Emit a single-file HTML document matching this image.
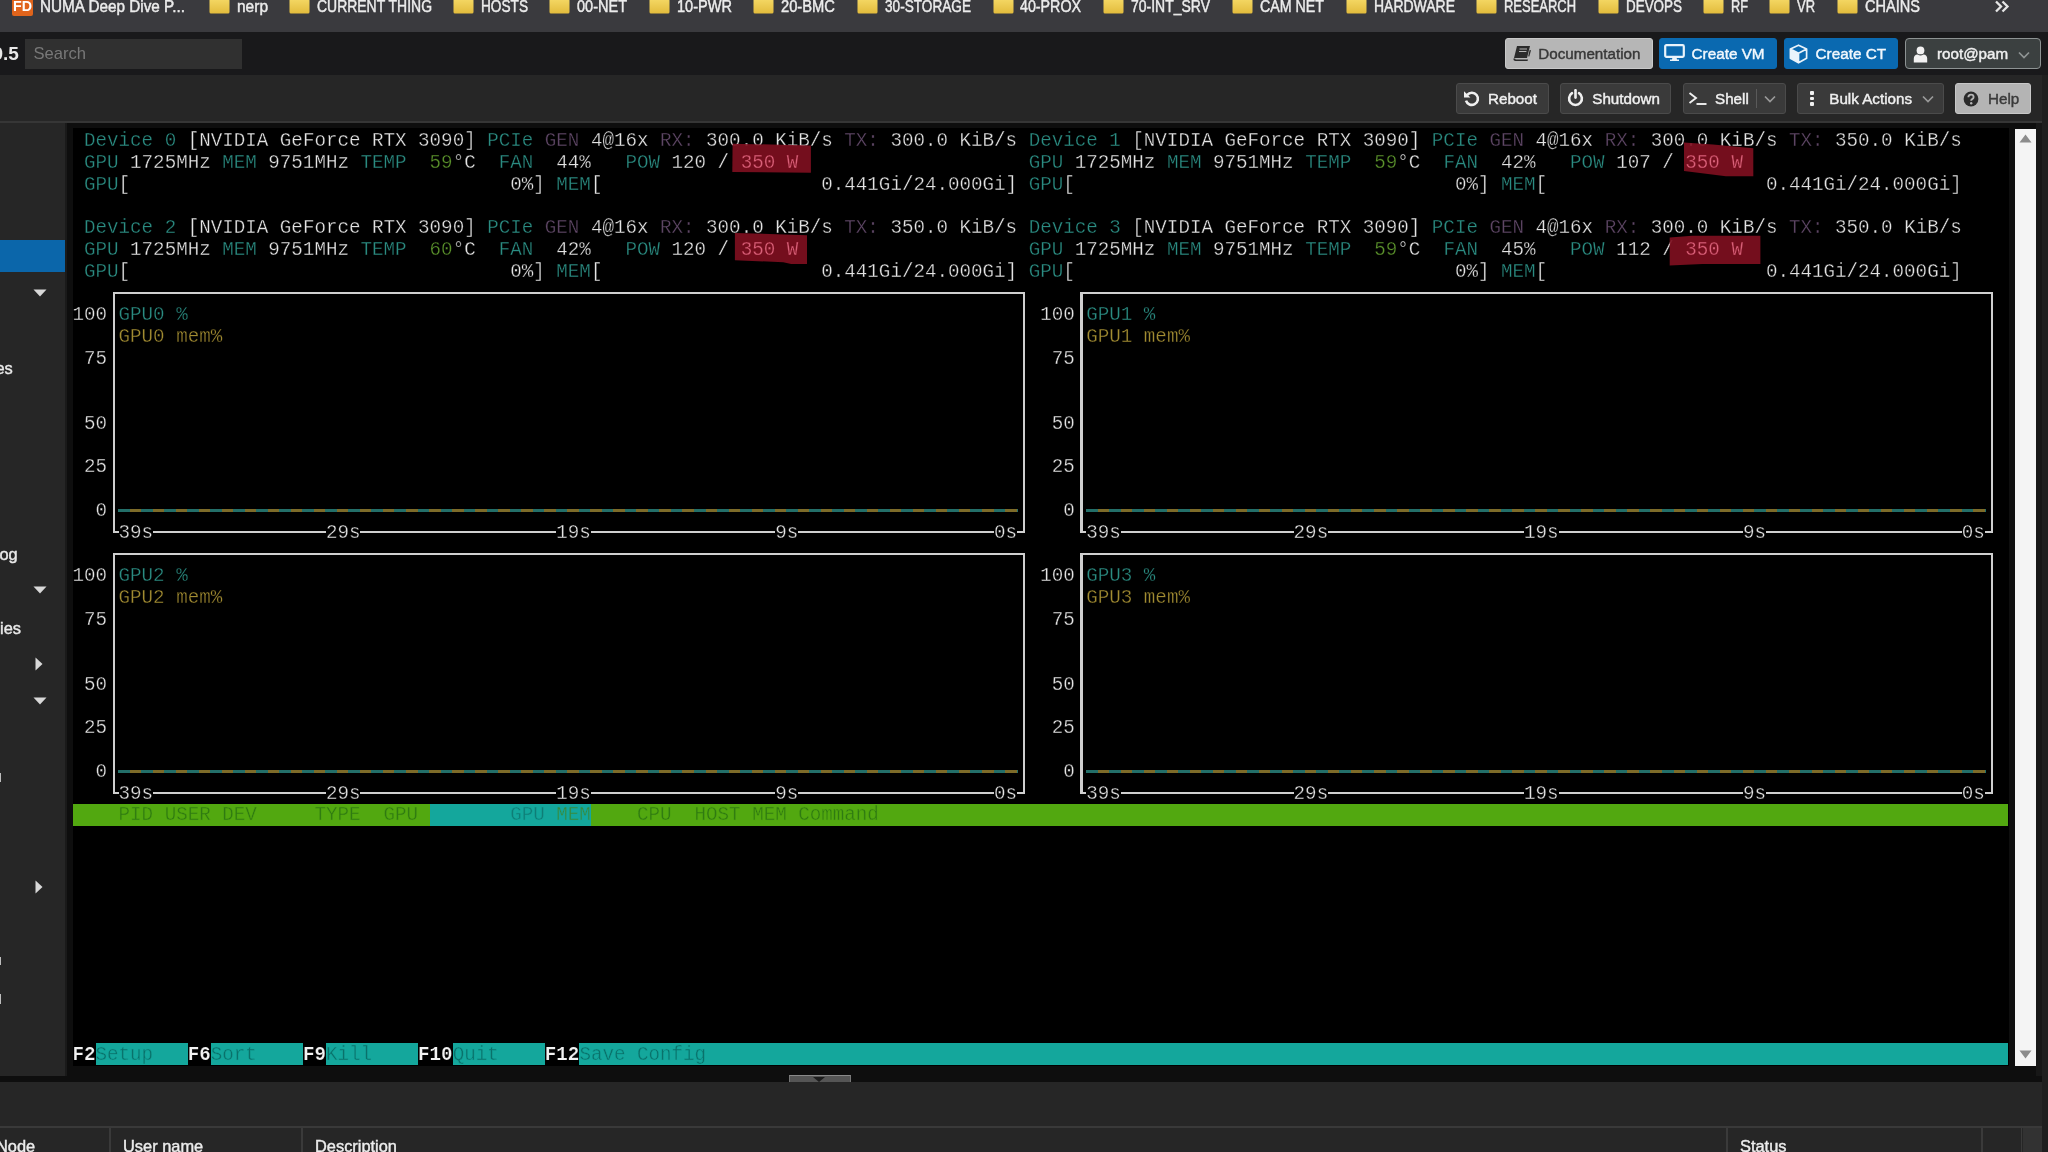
<!DOCTYPE html>
<html><head><meta charset="utf-8"><title>pve</title>
<style>
html,body{margin:0;padding:0;}
body{width:2048px;height:1152px;overflow:hidden;background:#262626;position:relative;font-family:"Liberation Sans",sans-serif;}
.t{position:absolute;font-family:"Liberation Mono",monospace;font-size:19.2px;line-height:21.75px;height:21.75px;white-space:pre;transform:scaleY(1.1);transform-origin:0 6.7px;-webkit-text-stroke:0.32px #000;}
.s{position:absolute;white-space:pre;font-family:"Liberation Sans",sans-serif;}
.bm{position:absolute;top:-5px;font-size:15px;line-height:20px;color:#e6e6e6;white-space:pre;}
.fo{position:absolute;top:-3px;width:20px;height:16px;}
.btn{position:absolute;box-sizing:border-box;border-radius:3px;}
.tb{background:#3a3a3a;border:1px solid #4a4a4a;top:84px;height:29px;}
.lbl{position:absolute;font-size:15.2px;line-height:20px;white-space:pre;-webkit-text-stroke:0.42px currentColor;}
</style></head><body><div id="root" style="position:absolute;left:0;top:0;width:2048px;height:1152px;will-change:transform;overflow:hidden;">

<div style="position:absolute;left:0.00px;top:0.00px;width:2048.00px;height:32.00px;background:#3a3a3e;"></div>
<div style="position:absolute;left:0.00px;top:32.00px;width:2048.00px;height:43.00px;background:#19191b;"></div>
<div style="position:absolute;left:0.00px;top:75.00px;width:2048.00px;height:47.00px;background:#262626;"></div>
<div style="position:absolute;left:0.00px;top:121.00px;width:2042.00px;height:2.00px;background:#363636;"></div>
<div style="position:absolute;left:2042.00px;top:75.00px;width:6.00px;height:1077.00px;background:#1f1f1f;"></div>
<div style="position:absolute;left:0.00px;top:123.00px;width:66.00px;height:953.00px;background:#262626;"></div>
<div style="position:absolute;left:65.00px;top:123.00px;width:2.00px;height:953.00px;background:#1a1a1a;"></div>
<div style="position:absolute;left:67.00px;top:123.00px;width:1975.00px;height:953.00px;background:#0e0e0e;"></div>
<div style="position:absolute;left:72.50px;top:128.00px;width:1936.00px;height:938.00px;background:#000;"></div>
<div style="position:absolute;left:2036.00px;top:123.00px;width:6.00px;height:953.00px;background:#171717;"></div>
<div style="position:absolute;left:2015.00px;top:129.00px;width:21.00px;height:936.50px;background:#f4f4f4;"></div>
<div style="position:absolute;left:0.00px;top:1075.50px;width:2042.00px;height:6.00px;background:#0e0e0e;"></div>
<div style="position:absolute;left:0.00px;top:1081.50px;width:2042.00px;height:71.00px;background:#262626;"></div>
<div style="position:absolute;left:12px;top:-4px;width:21px;height:20px;background:#e0641c;border-radius:2px;"></div>
<svg style="position:absolute;left:13.0px;top:-6.8px;overflow:visible" width="19.0" height="24"><text x="0" y="18.0" textLength="19.0" lengthAdjust="spacingAndGlyphs" font-family="Liberation Sans, sans-serif" font-size="15" font-weight="bold" fill="#fff" stroke="#fff" stroke-width="0">FD</text></svg>
<svg style="position:absolute;left:40.0px;top:-8.3px;overflow:visible" width="145.0" height="26"><text x="0" y="19.7" textLength="145.0" lengthAdjust="spacingAndGlyphs" font-family="Liberation Sans, sans-serif" font-size="16.4" font-weight="normal" fill="#ececec" stroke="#ececec" stroke-width="0.45">NUMA Deep Dive P...</text></svg>
<svg style="position:absolute;left:209px;top:-3.5px" width="21" height="17" viewBox="0 0 21 17"><defs><linearGradient id="fg209" x1="0" y1="0" x2="0" y2="1"><stop offset="0" stop-color="#f7dc6a"/><stop offset="1" stop-color="#e2bb3c"/></linearGradient></defs><path d="M1 0 H8 L10 2 H19 Q20.5 2 20.5 3.5 V15 Q20.5 16.5 19 16.5 H2 Q0.5 16.5 0.5 15 V1 Q0.5 0 1 0Z" fill="url(#fg209)"/></svg>
<svg style="position:absolute;left:237.0px;top:-8.3px;overflow:visible" width="31.0" height="26"><text x="0" y="19.7" textLength="31.0" lengthAdjust="spacingAndGlyphs" font-family="Liberation Sans, sans-serif" font-size="16.4" font-weight="normal" fill="#ececec" stroke="#ececec" stroke-width="0.45">nerp</text></svg>
<svg style="position:absolute;left:289px;top:-3.5px" width="21" height="17" viewBox="0 0 21 17"><defs><linearGradient id="fg289" x1="0" y1="0" x2="0" y2="1"><stop offset="0" stop-color="#f7dc6a"/><stop offset="1" stop-color="#e2bb3c"/></linearGradient></defs><path d="M1 0 H8 L10 2 H19 Q20.5 2 20.5 3.5 V15 Q20.5 16.5 19 16.5 H2 Q0.5 16.5 0.5 15 V1 Q0.5 0 1 0Z" fill="url(#fg289)"/></svg>
<svg style="position:absolute;left:317.0px;top:-8.3px;overflow:visible" width="115.0" height="26"><text x="0" y="19.7" textLength="115.0" lengthAdjust="spacingAndGlyphs" font-family="Liberation Sans, sans-serif" font-size="16.4" font-weight="normal" fill="#ececec" stroke="#ececec" stroke-width="0.45">CURRENT THING</text></svg>
<svg style="position:absolute;left:453px;top:-3.5px" width="21" height="17" viewBox="0 0 21 17"><defs><linearGradient id="fg453" x1="0" y1="0" x2="0" y2="1"><stop offset="0" stop-color="#f7dc6a"/><stop offset="1" stop-color="#e2bb3c"/></linearGradient></defs><path d="M1 0 H8 L10 2 H19 Q20.5 2 20.5 3.5 V15 Q20.5 16.5 19 16.5 H2 Q0.5 16.5 0.5 15 V1 Q0.5 0 1 0Z" fill="url(#fg453)"/></svg>
<svg style="position:absolute;left:481.0px;top:-8.3px;overflow:visible" width="47.0" height="26"><text x="0" y="19.7" textLength="47.0" lengthAdjust="spacingAndGlyphs" font-family="Liberation Sans, sans-serif" font-size="16.4" font-weight="normal" fill="#ececec" stroke="#ececec" stroke-width="0.45">HOSTS</text></svg>
<svg style="position:absolute;left:549px;top:-3.5px" width="21" height="17" viewBox="0 0 21 17"><defs><linearGradient id="fg549" x1="0" y1="0" x2="0" y2="1"><stop offset="0" stop-color="#f7dc6a"/><stop offset="1" stop-color="#e2bb3c"/></linearGradient></defs><path d="M1 0 H8 L10 2 H19 Q20.5 2 20.5 3.5 V15 Q20.5 16.5 19 16.5 H2 Q0.5 16.5 0.5 15 V1 Q0.5 0 1 0Z" fill="url(#fg549)"/></svg>
<svg style="position:absolute;left:577.0px;top:-8.3px;overflow:visible" width="50.0" height="26"><text x="0" y="19.7" textLength="50.0" lengthAdjust="spacingAndGlyphs" font-family="Liberation Sans, sans-serif" font-size="16.4" font-weight="normal" fill="#ececec" stroke="#ececec" stroke-width="0.45">00-NET</text></svg>
<svg style="position:absolute;left:649px;top:-3.5px" width="21" height="17" viewBox="0 0 21 17"><defs><linearGradient id="fg649" x1="0" y1="0" x2="0" y2="1"><stop offset="0" stop-color="#f7dc6a"/><stop offset="1" stop-color="#e2bb3c"/></linearGradient></defs><path d="M1 0 H8 L10 2 H19 Q20.5 2 20.5 3.5 V15 Q20.5 16.5 19 16.5 H2 Q0.5 16.5 0.5 15 V1 Q0.5 0 1 0Z" fill="url(#fg649)"/></svg>
<svg style="position:absolute;left:677.0px;top:-8.3px;overflow:visible" width="55.0" height="26"><text x="0" y="19.7" textLength="55.0" lengthAdjust="spacingAndGlyphs" font-family="Liberation Sans, sans-serif" font-size="16.4" font-weight="normal" fill="#ececec" stroke="#ececec" stroke-width="0.45">10-PWR</text></svg>
<svg style="position:absolute;left:753px;top:-3.5px" width="21" height="17" viewBox="0 0 21 17"><defs><linearGradient id="fg753" x1="0" y1="0" x2="0" y2="1"><stop offset="0" stop-color="#f7dc6a"/><stop offset="1" stop-color="#e2bb3c"/></linearGradient></defs><path d="M1 0 H8 L10 2 H19 Q20.5 2 20.5 3.5 V15 Q20.5 16.5 19 16.5 H2 Q0.5 16.5 0.5 15 V1 Q0.5 0 1 0Z" fill="url(#fg753)"/></svg>
<svg style="position:absolute;left:781.0px;top:-8.3px;overflow:visible" width="54.0" height="26"><text x="0" y="19.7" textLength="54.0" lengthAdjust="spacingAndGlyphs" font-family="Liberation Sans, sans-serif" font-size="16.4" font-weight="normal" fill="#ececec" stroke="#ececec" stroke-width="0.45">20-BMC</text></svg>
<svg style="position:absolute;left:857px;top:-3.5px" width="21" height="17" viewBox="0 0 21 17"><defs><linearGradient id="fg857" x1="0" y1="0" x2="0" y2="1"><stop offset="0" stop-color="#f7dc6a"/><stop offset="1" stop-color="#e2bb3c"/></linearGradient></defs><path d="M1 0 H8 L10 2 H19 Q20.5 2 20.5 3.5 V15 Q20.5 16.5 19 16.5 H2 Q0.5 16.5 0.5 15 V1 Q0.5 0 1 0Z" fill="url(#fg857)"/></svg>
<svg style="position:absolute;left:885.0px;top:-8.3px;overflow:visible" width="86.0" height="26"><text x="0" y="19.7" textLength="86.0" lengthAdjust="spacingAndGlyphs" font-family="Liberation Sans, sans-serif" font-size="16.4" font-weight="normal" fill="#ececec" stroke="#ececec" stroke-width="0.45">30-STORAGE</text></svg>
<svg style="position:absolute;left:993px;top:-3.5px" width="21" height="17" viewBox="0 0 21 17"><defs><linearGradient id="fg993" x1="0" y1="0" x2="0" y2="1"><stop offset="0" stop-color="#f7dc6a"/><stop offset="1" stop-color="#e2bb3c"/></linearGradient></defs><path d="M1 0 H8 L10 2 H19 Q20.5 2 20.5 3.5 V15 Q20.5 16.5 19 16.5 H2 Q0.5 16.5 0.5 15 V1 Q0.5 0 1 0Z" fill="url(#fg993)"/></svg>
<svg style="position:absolute;left:1020.0px;top:-8.3px;overflow:visible" width="61.0" height="26"><text x="0" y="19.7" textLength="61.0" lengthAdjust="spacingAndGlyphs" font-family="Liberation Sans, sans-serif" font-size="16.4" font-weight="normal" fill="#ececec" stroke="#ececec" stroke-width="0.45">40-PROX</text></svg>
<svg style="position:absolute;left:1103px;top:-3.5px" width="21" height="17" viewBox="0 0 21 17"><defs><linearGradient id="fg1103" x1="0" y1="0" x2="0" y2="1"><stop offset="0" stop-color="#f7dc6a"/><stop offset="1" stop-color="#e2bb3c"/></linearGradient></defs><path d="M1 0 H8 L10 2 H19 Q20.5 2 20.5 3.5 V15 Q20.5 16.5 19 16.5 H2 Q0.5 16.5 0.5 15 V1 Q0.5 0 1 0Z" fill="url(#fg1103)"/></svg>
<svg style="position:absolute;left:1131.0px;top:-8.3px;overflow:visible" width="79.0" height="26"><text x="0" y="19.7" textLength="79.0" lengthAdjust="spacingAndGlyphs" font-family="Liberation Sans, sans-serif" font-size="16.4" font-weight="normal" fill="#ececec" stroke="#ececec" stroke-width="0.45">70-INT_SRV</text></svg>
<svg style="position:absolute;left:1232px;top:-3.5px" width="21" height="17" viewBox="0 0 21 17"><defs><linearGradient id="fg1232" x1="0" y1="0" x2="0" y2="1"><stop offset="0" stop-color="#f7dc6a"/><stop offset="1" stop-color="#e2bb3c"/></linearGradient></defs><path d="M1 0 H8 L10 2 H19 Q20.5 2 20.5 3.5 V15 Q20.5 16.5 19 16.5 H2 Q0.5 16.5 0.5 15 V1 Q0.5 0 1 0Z" fill="url(#fg1232)"/></svg>
<svg style="position:absolute;left:1260.0px;top:-8.3px;overflow:visible" width="64.0" height="26"><text x="0" y="19.7" textLength="64.0" lengthAdjust="spacingAndGlyphs" font-family="Liberation Sans, sans-serif" font-size="16.4" font-weight="normal" fill="#ececec" stroke="#ececec" stroke-width="0.45">CAM NET</text></svg>
<svg style="position:absolute;left:1346px;top:-3.5px" width="21" height="17" viewBox="0 0 21 17"><defs><linearGradient id="fg1346" x1="0" y1="0" x2="0" y2="1"><stop offset="0" stop-color="#f7dc6a"/><stop offset="1" stop-color="#e2bb3c"/></linearGradient></defs><path d="M1 0 H8 L10 2 H19 Q20.5 2 20.5 3.5 V15 Q20.5 16.5 19 16.5 H2 Q0.5 16.5 0.5 15 V1 Q0.5 0 1 0Z" fill="url(#fg1346)"/></svg>
<svg style="position:absolute;left:1374.0px;top:-8.3px;overflow:visible" width="81.0" height="26"><text x="0" y="19.7" textLength="81.0" lengthAdjust="spacingAndGlyphs" font-family="Liberation Sans, sans-serif" font-size="16.4" font-weight="normal" fill="#ececec" stroke="#ececec" stroke-width="0.45">HARDWARE</text></svg>
<svg style="position:absolute;left:1476px;top:-3.5px" width="21" height="17" viewBox="0 0 21 17"><defs><linearGradient id="fg1476" x1="0" y1="0" x2="0" y2="1"><stop offset="0" stop-color="#f7dc6a"/><stop offset="1" stop-color="#e2bb3c"/></linearGradient></defs><path d="M1 0 H8 L10 2 H19 Q20.5 2 20.5 3.5 V15 Q20.5 16.5 19 16.5 H2 Q0.5 16.5 0.5 15 V1 Q0.5 0 1 0Z" fill="url(#fg1476)"/></svg>
<svg style="position:absolute;left:1504.0px;top:-8.3px;overflow:visible" width="72.0" height="26"><text x="0" y="19.7" textLength="72.0" lengthAdjust="spacingAndGlyphs" font-family="Liberation Sans, sans-serif" font-size="16.4" font-weight="normal" fill="#ececec" stroke="#ececec" stroke-width="0.45">RESEARCH</text></svg>
<svg style="position:absolute;left:1598px;top:-3.5px" width="21" height="17" viewBox="0 0 21 17"><defs><linearGradient id="fg1598" x1="0" y1="0" x2="0" y2="1"><stop offset="0" stop-color="#f7dc6a"/><stop offset="1" stop-color="#e2bb3c"/></linearGradient></defs><path d="M1 0 H8 L10 2 H19 Q20.5 2 20.5 3.5 V15 Q20.5 16.5 19 16.5 H2 Q0.5 16.5 0.5 15 V1 Q0.5 0 1 0Z" fill="url(#fg1598)"/></svg>
<svg style="position:absolute;left:1626.0px;top:-8.3px;overflow:visible" width="56.0" height="26"><text x="0" y="19.7" textLength="56.0" lengthAdjust="spacingAndGlyphs" font-family="Liberation Sans, sans-serif" font-size="16.4" font-weight="normal" fill="#ececec" stroke="#ececec" stroke-width="0.45">DEVOPS</text></svg>
<svg style="position:absolute;left:1703px;top:-3.5px" width="21" height="17" viewBox="0 0 21 17"><defs><linearGradient id="fg1703" x1="0" y1="0" x2="0" y2="1"><stop offset="0" stop-color="#f7dc6a"/><stop offset="1" stop-color="#e2bb3c"/></linearGradient></defs><path d="M1 0 H8 L10 2 H19 Q20.5 2 20.5 3.5 V15 Q20.5 16.5 19 16.5 H2 Q0.5 16.5 0.5 15 V1 Q0.5 0 1 0Z" fill="url(#fg1703)"/></svg>
<svg style="position:absolute;left:1731.0px;top:-8.3px;overflow:visible" width="17.0" height="26"><text x="0" y="19.7" textLength="17.0" lengthAdjust="spacingAndGlyphs" font-family="Liberation Sans, sans-serif" font-size="16.4" font-weight="normal" fill="#ececec" stroke="#ececec" stroke-width="0.45">RF</text></svg>
<svg style="position:absolute;left:1769px;top:-3.5px" width="21" height="17" viewBox="0 0 21 17"><defs><linearGradient id="fg1769" x1="0" y1="0" x2="0" y2="1"><stop offset="0" stop-color="#f7dc6a"/><stop offset="1" stop-color="#e2bb3c"/></linearGradient></defs><path d="M1 0 H8 L10 2 H19 Q20.5 2 20.5 3.5 V15 Q20.5 16.5 19 16.5 H2 Q0.5 16.5 0.5 15 V1 Q0.5 0 1 0Z" fill="url(#fg1769)"/></svg>
<svg style="position:absolute;left:1797.0px;top:-8.3px;overflow:visible" width="18.0" height="26"><text x="0" y="19.7" textLength="18.0" lengthAdjust="spacingAndGlyphs" font-family="Liberation Sans, sans-serif" font-size="16.4" font-weight="normal" fill="#ececec" stroke="#ececec" stroke-width="0.45">VR</text></svg>
<svg style="position:absolute;left:1837px;top:-3.5px" width="21" height="17" viewBox="0 0 21 17"><defs><linearGradient id="fg1837" x1="0" y1="0" x2="0" y2="1"><stop offset="0" stop-color="#f7dc6a"/><stop offset="1" stop-color="#e2bb3c"/></linearGradient></defs><path d="M1 0 H8 L10 2 H19 Q20.5 2 20.5 3.5 V15 Q20.5 16.5 19 16.5 H2 Q0.5 16.5 0.5 15 V1 Q0.5 0 1 0Z" fill="url(#fg1837)"/></svg>
<svg style="position:absolute;left:1865.0px;top:-8.3px;overflow:visible" width="55.0" height="26"><text x="0" y="19.7" textLength="55.0" lengthAdjust="spacingAndGlyphs" font-family="Liberation Sans, sans-serif" font-size="16.4" font-weight="normal" fill="#ececec" stroke="#ececec" stroke-width="0.45">CHAINS</text></svg>
<svg style="position:absolute;left:1994px;top:0" width="16" height="14" viewBox="0 0 16 14"><path d="M2 1.5 L7 6.5 L2 11.5 M8.5 1.5 L13.5 6.5 L8.5 11.5" fill="none" stroke="#e6e6e6" stroke-width="2.3"/></svg>
<div class="s" style="left:-7.5px;top:43px;font-size:19px;line-height:22px;color:#e8e8e8;font-weight:bold;">0.5</div>
<div style="position:absolute;left:25.00px;top:39.00px;width:217.00px;height:30.00px;background:#303030;"></div>
<div class="s" style="left:33.5px;top:44px;font-size:16.6px;line-height:20px;color:#787878;">Search</div>
<div class="btn" style="left:1505px;top:38px;width:148px;height:31px;background:#b6b6b6;border:1px solid #c9c9c9;"></div>
<svg style="position:absolute;left:1512px;top:45px" width="20" height="17" viewBox="0 0 20 17"><path d="M5 1 H18 L15 13 H2 Z" fill="#2b2b2b"/><path d="M1.5 13.5 Q1 16 3.5 16 H15.5 L16 14.5 H4 Q3 14.5 3.2 13.5Z" fill="#2b2b2b"/><path d="M7.5 4 H15 M7 6.5 H14.4" stroke="#b6b6b6" stroke-width="1.1"/><path d="M17.6 5 L19 5.3 L17.3 11.5 L16.2 11.2Z" fill="#2b2b2b"/></svg>
<div class="lbl" style="left:1538.3px;top:44px;color:#383838;font-size:15.2px;">Documentation</div>
<div class="btn" style="left:1659px;top:38px;width:118px;height:31px;background:#0a69b0;border:1px solid #0a69b0;"></div>
<svg style="position:absolute;left:1664px;top:44px" width="21" height="18" viewBox="0 0 21 18"><rect x="1.2" y="1.2" width="18.6" height="11.6" rx="1.2" fill="none" stroke="#e9f3fb" stroke-width="2.2"/><path d="M8.5 13 H12.5 L13 15.5 H15 V17 H6 V15.5 H8Z" fill="#e9f3fb"/></svg>
<div class="lbl" style="left:1691.5px;top:44px;color:#f2f8fd;font-size:15.3px;">Create VM</div>
<div class="btn" style="left:1784px;top:38px;width:114px;height:31px;background:#0a69b0;border:1px solid #0a69b0;"></div>
<svg style="position:absolute;left:1789px;top:44px" width="19" height="20" viewBox="0 0 19 20"><path d="M9.5 1.2 L17.6 4.9 V14.3 L9.5 18.8 L1.4 14.3 V4.9Z M1.4 4.9 L9.5 9.3 L17.6 4.9 M9.5 9.3 V18.8" fill="none" stroke="#e9f3fb" stroke-width="1.7" stroke-linejoin="round"/><path d="M1.4 4.9 L9.5 9.3 V18.8 L1.4 14.3Z" fill="#e9f3fb"/></svg>
<div class="lbl" style="left:1815.5px;top:44px;color:#f2f8fd;font-size:15.3px;">Create CT</div>
<div class="btn" style="left:1905px;top:38px;width:136px;height:31px;background:#3b4040;border:1px solid #8d9393;border-width:1.5px;border-radius:4px;"></div>
<svg style="position:absolute;left:1913px;top:46px" width="15" height="17" viewBox="0 0 15 17"><circle cx="7.5" cy="4.4" r="3.9" fill="#f2f2f2"/><path d="M0.8 16.5 V12.5 Q0.8 8.6 4.6 8.4 Q7.5 10.6 10.4 8.4 Q14.2 8.6 14.2 12.5 V16.5Z" fill="#f2f2f2"/></svg>
<div class="lbl" style="left:1937px;top:44px;color:#f0f0f0;font-size:15.2px;">root@pam</div>
<svg style="position:absolute;left:2018px;top:51px" width="12" height="8" viewBox="0 0 12 8"><path d="M1 1.5 L6 6.5 L11 1.5" fill="none" stroke="#8f9494" stroke-width="1.7"/></svg>
<div class="btn" style="left:1456px;top:83.3px;width:93px;height:30.5px;background:#3a3a3a;border:1px solid #4b4b4b;"></div>
<svg style="position:absolute;left:1463px;top:90px" width="18" height="17" viewBox="0 0 18 17"><path d="M4.2 4.8 A6.1 6.1 0 1 1 3 10.6" fill="none" stroke="#f0f0f0" stroke-width="2.6"/><path d="M1 1.2 L1 7.6 L7.4 7.6Z" fill="#f0f0f0"/></svg>
<div class="lbl" style="left:1488px;top:88.6px;color:#f0f0f0;font-size:15.2px;">Reboot</div>
<div class="btn" style="left:1560px;top:83.3px;width:111px;height:30.5px;background:#3a3a3a;border:1px solid #4b4b4b;"></div>
<svg style="position:absolute;left:1567px;top:89px" width="17" height="18" viewBox="0 0 17 18"><path d="M5 4.2 A6.4 6.4 0 1 0 12 4.2" fill="none" stroke="#f0f0f0" stroke-width="2.6" stroke-linecap="round"/><path d="M8.5 1.2 V8.6" stroke="#f0f0f0" stroke-width="2.6" stroke-linecap="round"/></svg>
<div class="lbl" style="left:1592.3px;top:88.6px;color:#f0f0f0;font-size:15.2px;">Shutdown</div>
<div class="btn" style="left:1683px;top:83.3px;width:103px;height:30.5px;background:#3a3a3a;border:1px solid #4b4b4b;"></div>
<svg style="position:absolute;left:1688px;top:91px" width="20" height="15" viewBox="0 0 20 15"><path d="M1.5 2 L8 7 L1.5 12" fill="none" stroke="#f0f0f0" stroke-width="1.9"/><path d="M8.5 13 H18.5" stroke="#f0f0f0" stroke-width="1.9"/></svg>
<div class="lbl" style="left:1715px;top:88.6px;color:#f0f0f0;font-size:15.2px;">Shell</div>
<div style="position:absolute;left:1756.00px;top:89.00px;width:1.00px;height:19.00px;background:#5a5a5a;"></div>
<svg style="position:absolute;left:1763.5px;top:95px" width="12" height="8" viewBox="0 0 12 8"><path d="M1 1.5 L6 6.5 L11 1.5" fill="none" stroke="#9a9a9a" stroke-width="1.7"/></svg>
<div class="btn" style="left:1797px;top:83.3px;width:147px;height:30.5px;background:#3a3a3a;border:1px solid #4b4b4b;"></div>
<div style="position:absolute;left:1810.00px;top:91.20px;width:4.40px;height:3.70px;background:#f0f0f0;border-radius:1px;"></div>
<div style="position:absolute;left:1810.00px;top:96.60px;width:4.40px;height:3.70px;background:#f0f0f0;border-radius:1px;"></div>
<div style="position:absolute;left:1810.00px;top:102.00px;width:4.40px;height:3.70px;background:#f0f0f0;border-radius:1px;"></div>
<div class="lbl" style="left:1829.3px;top:88.6px;color:#f0f0f0;font-size:15.2px;">Bulk Actions</div>
<svg style="position:absolute;left:1921.5px;top:95px" width="12" height="8" viewBox="0 0 12 8"><path d="M1 1.5 L6 6.5 L11 1.5" fill="none" stroke="#9a9a9a" stroke-width="1.7"/></svg>
<div class="btn" style="left:1955px;top:83.3px;width:76px;height:30.5px;background:#b4b4b4;border:1px solid #c8c8c8;"></div>
<svg style="position:absolute;left:1963px;top:91px" width="16" height="16" viewBox="0 0 16 16"><circle cx="8" cy="8" r="7.4" fill="#2b2b2b"/><path d="M5.4 6.2 Q5.4 3.6 8 3.6 Q10.6 3.6 10.6 6 Q10.6 7.4 9.2 8.1 Q8.2 8.6 8.2 9.8" fill="none" stroke="#b4b4b4" stroke-width="1.9"/><circle cx="8.2" cy="12.2" r="1.2" fill="#b4b4b4"/></svg>
<div class="lbl" style="left:1988px;top:88.6px;color:#3a3a3a;font-size:15.2px;">Help</div>
<div style="position:absolute;left:0.00px;top:240.00px;width:64.80px;height:32.00px;background:#0b66aa;"></div>
<svg style="position:absolute;left:33px;top:289px" width="14" height="8" viewBox="0 0 14 8"><path d="M0.5 0.5 H13.5 L7 7.5Z" fill="#d8d8d8"/></svg>
<svg style="position:absolute;left:33px;top:586px" width="14" height="8" viewBox="0 0 14 8"><path d="M0.5 0.5 H13.5 L7 7.5Z" fill="#d8d8d8"/></svg>
<svg style="position:absolute;left:33px;top:697px" width="14" height="8" viewBox="0 0 14 8"><path d="M0.5 0.5 H13.5 L7 7.5Z" fill="#d8d8d8"/></svg>
<svg style="position:absolute;left:35px;top:657px" width="8" height="14" viewBox="0 0 8 14"><path d="M0.5 0.5 V13.5 L7.5 7Z" fill="#d8d8d8"/></svg>
<svg style="position:absolute;left:35px;top:880px" width="8" height="14" viewBox="0 0 8 14"><path d="M0.5 0.5 V13.5 L7.5 7Z" fill="#d8d8d8"/></svg>
<div class="s" style="left:-4.5px;top:358px;font-size:16.4px;line-height:20px;color:#eaeaea;-webkit-text-stroke:0.42px #eaeaea;">es</div>
<div class="s" style="left:-0.5px;top:543.5px;font-size:16.4px;line-height:20px;color:#eaeaea;-webkit-text-stroke:0.42px #eaeaea;">og</div>
<div class="s" style="left:0px;top:617.5px;font-size:16.4px;line-height:20px;color:#eaeaea;-webkit-text-stroke:0.42px #eaeaea;">ies</div>
<div id="term" style="position:absolute;left:0;top:0;width:2048px;height:1152px;will-change:transform;">
<span class="t" style="left:84.02px;top:130.10px;color:#2b8c82;">Device</span>
<span class="t" style="left:164.66px;top:130.10px;color:#2b8c82;">0</span>
<span class="t" style="left:187.70px;top:130.10px;color:#e4e4e4;">[NVIDIA</span>
<span class="t" style="left:279.86px;top:130.10px;color:#e4e4e4;">GeForce</span>
<span class="t" style="left:372.02px;top:130.10px;color:#e4e4e4;">RTX</span>
<span class="t" style="left:418.10px;top:130.10px;color:#e4e4e4;">3090]</span>
<span class="t" style="left:487.22px;top:130.10px;color:#2b8c82;">PCIe</span>
<span class="t" style="left:544.82px;top:130.10px;color:#5e4665;">GEN</span>
<span class="t" style="left:590.90px;top:130.10px;color:#e4e4e4;">4@16x</span>
<span class="t" style="left:660.02px;top:130.10px;color:#5e4665;">RX:</span>
<span class="t" style="left:706.10px;top:130.10px;color:#e4e4e4;">300.0</span>
<span class="t" style="left:775.22px;top:130.10px;color:#e4e4e4;">KiB/s</span>
<span class="t" style="left:844.34px;top:130.10px;color:#5e4665;">TX:</span>
<span class="t" style="left:890.42px;top:130.10px;color:#e4e4e4;">300.0</span>
<span class="t" style="left:959.54px;top:130.10px;color:#e4e4e4;">KiB/s</span>
<span class="t" style="left:84.02px;top:151.85px;color:#2b8c82;">GPU</span>
<span class="t" style="left:130.10px;top:151.85px;color:#e4e4e4;">1725MHz</span>
<span class="t" style="left:222.26px;top:151.85px;color:#2b8c82;">MEM</span>
<span class="t" style="left:268.34px;top:151.85px;color:#e4e4e4;">9751MHz</span>
<span class="t" style="left:360.50px;top:151.85px;color:#2b8c82;">TEMP</span>
<span class="t" style="left:429.62px;top:151.85px;color:#5c942c;">59</span>
<span class="t" style="left:452.66px;top:151.85px;color:#e4e4e4;">°C</span>
<span class="t" style="left:498.74px;top:151.85px;color:#2b8c82;">FAN</span>
<span class="t" style="left:556.34px;top:151.85px;color:#e4e4e4;">44%</span>
<span class="t" style="left:625.46px;top:151.85px;color:#2b8c82;">POW</span>
<span class="t" style="left:671.54px;top:151.85px;color:#e4e4e4;">120</span>
<span class="t" style="left:717.62px;top:151.85px;color:#e4e4e4;">/</span>
<span class="t" style="left:84.02px;top:173.60px;color:#2b8c82;">GPU</span>
<span class="t" style="left:118.58px;top:173.60px;color:#e4e4e4;">[</span>
<span class="t" style="left:510.26px;top:173.60px;color:#e4e4e4;">0%]</span>
<span class="t" style="left:556.34px;top:173.60px;color:#2b8c82;">MEM</span>
<span class="t" style="left:590.90px;top:173.60px;color:#e4e4e4;">[</span>
<span class="t" style="left:821.30px;top:173.60px;color:#e4e4e4;">0.441Gi/24.000Gi]</span>
<span class="t" style="left:1028.66px;top:130.10px;color:#2b8c82;">Device</span>
<span class="t" style="left:1109.30px;top:130.10px;color:#2b8c82;">1</span>
<span class="t" style="left:1132.34px;top:130.10px;color:#e4e4e4;">[NVIDIA</span>
<span class="t" style="left:1224.50px;top:130.10px;color:#e4e4e4;">GeForce</span>
<span class="t" style="left:1316.66px;top:130.10px;color:#e4e4e4;">RTX</span>
<span class="t" style="left:1362.74px;top:130.10px;color:#e4e4e4;">3090]</span>
<span class="t" style="left:1431.86px;top:130.10px;color:#2b8c82;">PCIe</span>
<span class="t" style="left:1489.46px;top:130.10px;color:#5e4665;">GEN</span>
<span class="t" style="left:1535.54px;top:130.10px;color:#e4e4e4;">4@16x</span>
<span class="t" style="left:1604.66px;top:130.10px;color:#5e4665;">RX:</span>
<span class="t" style="left:1650.74px;top:130.10px;color:#e4e4e4;">300.0</span>
<span class="t" style="left:1719.86px;top:130.10px;color:#e4e4e4;">KiB/s</span>
<span class="t" style="left:1788.98px;top:130.10px;color:#5e4665;">TX:</span>
<span class="t" style="left:1835.06px;top:130.10px;color:#e4e4e4;">350.0</span>
<span class="t" style="left:1904.18px;top:130.10px;color:#e4e4e4;">KiB/s</span>
<span class="t" style="left:1028.66px;top:151.85px;color:#2b8c82;">GPU</span>
<span class="t" style="left:1074.74px;top:151.85px;color:#e4e4e4;">1725MHz</span>
<span class="t" style="left:1166.90px;top:151.85px;color:#2b8c82;">MEM</span>
<span class="t" style="left:1212.98px;top:151.85px;color:#e4e4e4;">9751MHz</span>
<span class="t" style="left:1305.14px;top:151.85px;color:#2b8c82;">TEMP</span>
<span class="t" style="left:1374.26px;top:151.85px;color:#5c942c;">59</span>
<span class="t" style="left:1397.30px;top:151.85px;color:#e4e4e4;">°C</span>
<span class="t" style="left:1443.38px;top:151.85px;color:#2b8c82;">FAN</span>
<span class="t" style="left:1500.98px;top:151.85px;color:#e4e4e4;">42%</span>
<span class="t" style="left:1570.10px;top:151.85px;color:#2b8c82;">POW</span>
<span class="t" style="left:1616.18px;top:151.85px;color:#e4e4e4;">107</span>
<span class="t" style="left:1662.26px;top:151.85px;color:#e4e4e4;">/</span>
<span class="t" style="left:1028.66px;top:173.60px;color:#2b8c82;">GPU</span>
<span class="t" style="left:1063.22px;top:173.60px;color:#e4e4e4;">[</span>
<span class="t" style="left:1454.90px;top:173.60px;color:#e4e4e4;">0%]</span>
<span class="t" style="left:1500.98px;top:173.60px;color:#2b8c82;">MEM</span>
<span class="t" style="left:1535.54px;top:173.60px;color:#e4e4e4;">[</span>
<span class="t" style="left:1765.94px;top:173.60px;color:#e4e4e4;">0.441Gi/24.000Gi]</span>
<span class="t" style="left:84.02px;top:217.10px;color:#2b8c82;">Device</span>
<span class="t" style="left:164.66px;top:217.10px;color:#2b8c82;">2</span>
<span class="t" style="left:187.70px;top:217.10px;color:#e4e4e4;">[NVIDIA</span>
<span class="t" style="left:279.86px;top:217.10px;color:#e4e4e4;">GeForce</span>
<span class="t" style="left:372.02px;top:217.10px;color:#e4e4e4;">RTX</span>
<span class="t" style="left:418.10px;top:217.10px;color:#e4e4e4;">3090]</span>
<span class="t" style="left:487.22px;top:217.10px;color:#2b8c82;">PCIe</span>
<span class="t" style="left:544.82px;top:217.10px;color:#5e4665;">GEN</span>
<span class="t" style="left:590.90px;top:217.10px;color:#e4e4e4;">4@16x</span>
<span class="t" style="left:660.02px;top:217.10px;color:#5e4665;">RX:</span>
<span class="t" style="left:706.10px;top:217.10px;color:#e4e4e4;">300.0</span>
<span class="t" style="left:775.22px;top:217.10px;color:#e4e4e4;">KiB/s</span>
<span class="t" style="left:844.34px;top:217.10px;color:#5e4665;">TX:</span>
<span class="t" style="left:890.42px;top:217.10px;color:#e4e4e4;">350.0</span>
<span class="t" style="left:959.54px;top:217.10px;color:#e4e4e4;">KiB/s</span>
<span class="t" style="left:84.02px;top:238.85px;color:#2b8c82;">GPU</span>
<span class="t" style="left:130.10px;top:238.85px;color:#e4e4e4;">1725MHz</span>
<span class="t" style="left:222.26px;top:238.85px;color:#2b8c82;">MEM</span>
<span class="t" style="left:268.34px;top:238.85px;color:#e4e4e4;">9751MHz</span>
<span class="t" style="left:360.50px;top:238.85px;color:#2b8c82;">TEMP</span>
<span class="t" style="left:429.62px;top:238.85px;color:#5c942c;">60</span>
<span class="t" style="left:452.66px;top:238.85px;color:#e4e4e4;">°C</span>
<span class="t" style="left:498.74px;top:238.85px;color:#2b8c82;">FAN</span>
<span class="t" style="left:556.34px;top:238.85px;color:#e4e4e4;">42%</span>
<span class="t" style="left:625.46px;top:238.85px;color:#2b8c82;">POW</span>
<span class="t" style="left:671.54px;top:238.85px;color:#e4e4e4;">120</span>
<span class="t" style="left:717.62px;top:238.85px;color:#e4e4e4;">/</span>
<span class="t" style="left:84.02px;top:260.60px;color:#2b8c82;">GPU</span>
<span class="t" style="left:118.58px;top:260.60px;color:#e4e4e4;">[</span>
<span class="t" style="left:510.26px;top:260.60px;color:#e4e4e4;">0%]</span>
<span class="t" style="left:556.34px;top:260.60px;color:#2b8c82;">MEM</span>
<span class="t" style="left:590.90px;top:260.60px;color:#e4e4e4;">[</span>
<span class="t" style="left:821.30px;top:260.60px;color:#e4e4e4;">0.441Gi/24.000Gi]</span>
<span class="t" style="left:1028.66px;top:217.10px;color:#2b8c82;">Device</span>
<span class="t" style="left:1109.30px;top:217.10px;color:#2b8c82;">3</span>
<span class="t" style="left:1132.34px;top:217.10px;color:#e4e4e4;">[NVIDIA</span>
<span class="t" style="left:1224.50px;top:217.10px;color:#e4e4e4;">GeForce</span>
<span class="t" style="left:1316.66px;top:217.10px;color:#e4e4e4;">RTX</span>
<span class="t" style="left:1362.74px;top:217.10px;color:#e4e4e4;">3090]</span>
<span class="t" style="left:1431.86px;top:217.10px;color:#2b8c82;">PCIe</span>
<span class="t" style="left:1489.46px;top:217.10px;color:#5e4665;">GEN</span>
<span class="t" style="left:1535.54px;top:217.10px;color:#e4e4e4;">4@16x</span>
<span class="t" style="left:1604.66px;top:217.10px;color:#5e4665;">RX:</span>
<span class="t" style="left:1650.74px;top:217.10px;color:#e4e4e4;">300.0</span>
<span class="t" style="left:1719.86px;top:217.10px;color:#e4e4e4;">KiB/s</span>
<span class="t" style="left:1788.98px;top:217.10px;color:#5e4665;">TX:</span>
<span class="t" style="left:1835.06px;top:217.10px;color:#e4e4e4;">350.0</span>
<span class="t" style="left:1904.18px;top:217.10px;color:#e4e4e4;">KiB/s</span>
<span class="t" style="left:1028.66px;top:238.85px;color:#2b8c82;">GPU</span>
<span class="t" style="left:1074.74px;top:238.85px;color:#e4e4e4;">1725MHz</span>
<span class="t" style="left:1166.90px;top:238.85px;color:#2b8c82;">MEM</span>
<span class="t" style="left:1212.98px;top:238.85px;color:#e4e4e4;">9751MHz</span>
<span class="t" style="left:1305.14px;top:238.85px;color:#2b8c82;">TEMP</span>
<span class="t" style="left:1374.26px;top:238.85px;color:#5c942c;">59</span>
<span class="t" style="left:1397.30px;top:238.85px;color:#e4e4e4;">°C</span>
<span class="t" style="left:1443.38px;top:238.85px;color:#2b8c82;">FAN</span>
<span class="t" style="left:1500.98px;top:238.85px;color:#e4e4e4;">45%</span>
<span class="t" style="left:1570.10px;top:238.85px;color:#2b8c82;">POW</span>
<span class="t" style="left:1616.18px;top:238.85px;color:#e4e4e4;">112</span>
<span class="t" style="left:1662.26px;top:238.85px;color:#e4e4e4;">/</span>
<span class="t" style="left:1028.66px;top:260.60px;color:#2b8c82;">GPU</span>
<span class="t" style="left:1063.22px;top:260.60px;color:#e4e4e4;">[</span>
<span class="t" style="left:1454.90px;top:260.60px;color:#e4e4e4;">0%]</span>
<span class="t" style="left:1500.98px;top:260.60px;color:#2b8c82;">MEM</span>
<span class="t" style="left:1535.54px;top:260.60px;color:#e4e4e4;">[</span>
<span class="t" style="left:1765.94px;top:260.60px;color:#e4e4e4;">0.441Gi/24.000Gi]</span>
<div style="position:absolute;left:112.77px;top:291.88px;width:912.38px;height:2.30px;background:#cfcfcf;"></div>
<div style="position:absolute;left:112.77px;top:291.88px;width:2.30px;height:241.25px;background:#cfcfcf;"></div>
<div style="position:absolute;left:1022.85px;top:291.88px;width:2.30px;height:241.25px;background:#cfcfcf;"></div>
<div style="position:absolute;left:112.77px;top:530.83px;width:912.38px;height:2.30px;background:#cfcfcf;"></div>
<span class="t" style="left:72.50px;top:304.10px;color:#e4e4e4;">100</span>
<span class="t" style="left:84.02px;top:347.60px;color:#e4e4e4;">75</span>
<span class="t" style="left:84.02px;top:412.85px;color:#e4e4e4;">50</span>
<span class="t" style="left:84.02px;top:456.35px;color:#e4e4e4;">25</span>
<span class="t" style="left:95.54px;top:499.85px;color:#e4e4e4;">0</span>
<span class="t" style="left:118.58px;top:304.10px;color:#2b8c82;">GPU0</span>
<span class="t" style="left:176.18px;top:304.10px;color:#2b8c82;">%</span>
<span class="t" style="left:118.58px;top:325.85px;color:#a28c32;">GPU0</span>
<span class="t" style="left:176.18px;top:325.85px;color:#a28c32;">mem%</span>
<div style="position:absolute;left:118.28px;top:509.38px;width:899.86px;height:2.2px;background:repeating-linear-gradient(90deg,#236f69 0,#236f69 11.52px,#7d6b29 11.52px,#7d6b29 23.04px);"></div>
<span class="t" style="left:118.58px;top:521.60px;color:#e4e4e4;background:#000;">39s</span>
<span class="t" style="left:325.94px;top:521.60px;color:#e4e4e4;background:#000;">29s</span>
<span class="t" style="left:556.34px;top:521.60px;color:#e4e4e4;background:#000;">19s</span>
<span class="t" style="left:775.22px;top:521.60px;color:#e4e4e4;background:#000;">9s</span>
<span class="t" style="left:994.10px;top:521.60px;color:#e4e4e4;background:#000;">0s</span>
<div style="position:absolute;left:1080.45px;top:291.88px;width:912.38px;height:2.30px;background:#cfcfcf;"></div>
<div style="position:absolute;left:1080.45px;top:291.88px;width:2.30px;height:241.25px;background:#cfcfcf;"></div>
<div style="position:absolute;left:1990.53px;top:291.88px;width:2.30px;height:241.25px;background:#cfcfcf;"></div>
<div style="position:absolute;left:1080.45px;top:530.83px;width:912.38px;height:2.30px;background:#cfcfcf;"></div>
<span class="t" style="left:1040.18px;top:304.10px;color:#e4e4e4;">100</span>
<span class="t" style="left:1051.70px;top:347.60px;color:#e4e4e4;">75</span>
<span class="t" style="left:1051.70px;top:412.85px;color:#e4e4e4;">50</span>
<span class="t" style="left:1051.70px;top:456.35px;color:#e4e4e4;">25</span>
<span class="t" style="left:1063.22px;top:499.85px;color:#e4e4e4;">0</span>
<span class="t" style="left:1086.26px;top:304.10px;color:#2b8c82;">GPU1</span>
<span class="t" style="left:1143.86px;top:304.10px;color:#2b8c82;">%</span>
<span class="t" style="left:1086.26px;top:325.85px;color:#a28c32;">GPU1</span>
<span class="t" style="left:1143.86px;top:325.85px;color:#a28c32;">mem%</span>
<div style="position:absolute;left:1085.96px;top:509.38px;width:899.86px;height:2.2px;background:repeating-linear-gradient(90deg,#236f69 0,#236f69 11.52px,#7d6b29 11.52px,#7d6b29 23.04px);"></div>
<span class="t" style="left:1086.26px;top:521.60px;color:#e4e4e4;background:#000;">39s</span>
<span class="t" style="left:1293.62px;top:521.60px;color:#e4e4e4;background:#000;">29s</span>
<span class="t" style="left:1524.02px;top:521.60px;color:#e4e4e4;background:#000;">19s</span>
<span class="t" style="left:1742.90px;top:521.60px;color:#e4e4e4;background:#000;">9s</span>
<span class="t" style="left:1961.78px;top:521.60px;color:#e4e4e4;background:#000;">0s</span>
<div style="position:absolute;left:112.77px;top:552.88px;width:912.38px;height:2.30px;background:#cfcfcf;"></div>
<div style="position:absolute;left:112.77px;top:552.88px;width:2.30px;height:241.25px;background:#cfcfcf;"></div>
<div style="position:absolute;left:1022.85px;top:552.88px;width:2.30px;height:241.25px;background:#cfcfcf;"></div>
<div style="position:absolute;left:112.77px;top:791.83px;width:912.38px;height:2.30px;background:#cfcfcf;"></div>
<span class="t" style="left:72.50px;top:565.10px;color:#e4e4e4;">100</span>
<span class="t" style="left:84.02px;top:608.60px;color:#e4e4e4;">75</span>
<span class="t" style="left:84.02px;top:673.85px;color:#e4e4e4;">50</span>
<span class="t" style="left:84.02px;top:717.35px;color:#e4e4e4;">25</span>
<span class="t" style="left:95.54px;top:760.85px;color:#e4e4e4;">0</span>
<span class="t" style="left:118.58px;top:565.10px;color:#2b8c82;">GPU2</span>
<span class="t" style="left:176.18px;top:565.10px;color:#2b8c82;">%</span>
<span class="t" style="left:118.58px;top:586.85px;color:#a28c32;">GPU2</span>
<span class="t" style="left:176.18px;top:586.85px;color:#a28c32;">mem%</span>
<div style="position:absolute;left:118.28px;top:770.38px;width:899.86px;height:2.2px;background:repeating-linear-gradient(90deg,#236f69 0,#236f69 11.52px,#7d6b29 11.52px,#7d6b29 23.04px);"></div>
<span class="t" style="left:118.58px;top:782.60px;color:#e4e4e4;background:#000;">39s</span>
<span class="t" style="left:325.94px;top:782.60px;color:#e4e4e4;background:#000;">29s</span>
<span class="t" style="left:556.34px;top:782.60px;color:#e4e4e4;background:#000;">19s</span>
<span class="t" style="left:775.22px;top:782.60px;color:#e4e4e4;background:#000;">9s</span>
<span class="t" style="left:994.10px;top:782.60px;color:#e4e4e4;background:#000;">0s</span>
<div style="position:absolute;left:1080.45px;top:552.88px;width:912.38px;height:2.30px;background:#cfcfcf;"></div>
<div style="position:absolute;left:1080.45px;top:552.88px;width:2.30px;height:241.25px;background:#cfcfcf;"></div>
<div style="position:absolute;left:1990.53px;top:552.88px;width:2.30px;height:241.25px;background:#cfcfcf;"></div>
<div style="position:absolute;left:1080.45px;top:791.83px;width:912.38px;height:2.30px;background:#cfcfcf;"></div>
<span class="t" style="left:1040.18px;top:565.10px;color:#e4e4e4;">100</span>
<span class="t" style="left:1051.70px;top:608.60px;color:#e4e4e4;">75</span>
<span class="t" style="left:1051.70px;top:673.85px;color:#e4e4e4;">50</span>
<span class="t" style="left:1051.70px;top:717.35px;color:#e4e4e4;">25</span>
<span class="t" style="left:1063.22px;top:760.85px;color:#e4e4e4;">0</span>
<span class="t" style="left:1086.26px;top:565.10px;color:#2b8c82;">GPU3</span>
<span class="t" style="left:1143.86px;top:565.10px;color:#2b8c82;">%</span>
<span class="t" style="left:1086.26px;top:586.85px;color:#a28c32;">GPU3</span>
<span class="t" style="left:1143.86px;top:586.85px;color:#a28c32;">mem%</span>
<div style="position:absolute;left:1085.96px;top:770.38px;width:899.86px;height:2.2px;background:repeating-linear-gradient(90deg,#236f69 0,#236f69 11.52px,#7d6b29 11.52px,#7d6b29 23.04px);"></div>
<span class="t" style="left:1086.26px;top:782.60px;color:#e4e4e4;background:#000;">39s</span>
<span class="t" style="left:1293.62px;top:782.60px;color:#e4e4e4;background:#000;">29s</span>
<span class="t" style="left:1524.02px;top:782.60px;color:#e4e4e4;background:#000;">19s</span>
<span class="t" style="left:1742.90px;top:782.60px;color:#e4e4e4;background:#000;">9s</span>
<span class="t" style="left:1961.78px;top:782.60px;color:#e4e4e4;background:#000;">0s</span>
<div style="position:absolute;left:72.50px;top:803.75px;width:1935.36px;height:22.05px;background:#52a810;"></div>
<div style="position:absolute;left:429.62px;top:803.75px;width:161.28px;height:22.05px;background:#14a79c;"></div>
<span class="t" style="left:118.58px;top:804.35px;color:#2f7a12;-webkit-text-stroke:0.4px #52a810;">PID</span>
<span class="t" style="left:164.66px;top:804.35px;color:#2f7a12;-webkit-text-stroke:0.4px #52a810;">USER</span>
<span class="t" style="left:222.26px;top:804.35px;color:#2f7a12;-webkit-text-stroke:0.4px #52a810;">DEV</span>
<span class="t" style="left:314.42px;top:804.35px;color:#2f7a12;-webkit-text-stroke:0.4px #52a810;">TYPE</span>
<span class="t" style="left:383.54px;top:804.35px;color:#2f7a12;-webkit-text-stroke:0.4px #52a810;">GPU</span>
<span class="t" style="left:636.98px;top:804.35px;color:#2f7a12;-webkit-text-stroke:0.4px #52a810;">CPU</span>
<span class="t" style="left:694.58px;top:804.35px;color:#2f7a12;-webkit-text-stroke:0.4px #52a810;">HOST</span>
<span class="t" style="left:752.18px;top:804.35px;color:#2f7a12;-webkit-text-stroke:0.4px #52a810;">MEM</span>
<span class="t" style="left:798.26px;top:804.35px;color:#2f7a12;-webkit-text-stroke:0.4px #52a810;">Command</span>
<span class="t" style="left:510.26px;top:804.35px;color:#0f7d76;-webkit-text-stroke:0.4px #14a79c;">GPU</span>
<span class="t" style="left:556.34px;top:804.35px;color:#3a8a3a;-webkit-text-stroke:0.4px #14a79c;">MEM</span>
<div style="position:absolute;left:95.54px;top:1043.00px;width:92.16px;height:22.05px;background:#14a79c;"></div>
<div style="position:absolute;left:210.74px;top:1043.00px;width:92.16px;height:22.05px;background:#14a79c;"></div>
<div style="position:absolute;left:325.94px;top:1043.00px;width:92.16px;height:22.05px;background:#14a79c;"></div>
<div style="position:absolute;left:452.66px;top:1043.00px;width:92.16px;height:22.05px;background:#14a79c;"></div>
<div style="position:absolute;left:579.38px;top:1043.00px;width:1428.48px;height:22.05px;background:#14a79c;"></div>
<span class="t" style="left:72.50px;top:1043.60px;color:#f2f2f2;font-weight:bold;-webkit-text-stroke:0.2px #000;">F2</span>
<span class="t" style="left:187.70px;top:1043.60px;color:#f2f2f2;font-weight:bold;-webkit-text-stroke:0.2px #000;">F6</span>
<span class="t" style="left:302.90px;top:1043.60px;color:#f2f2f2;font-weight:bold;-webkit-text-stroke:0.2px #000;">F9</span>
<span class="t" style="left:418.10px;top:1043.60px;color:#f2f2f2;font-weight:bold;-webkit-text-stroke:0.2px #000;">F10</span>
<span class="t" style="left:544.82px;top:1043.60px;color:#f2f2f2;font-weight:bold;-webkit-text-stroke:0.2px #000;">F12</span>
<span class="t" style="left:95.54px;top:1043.60px;color:#0a716a;-webkit-text-stroke:0.4px #14a79c;">Setup</span>
<span class="t" style="left:210.74px;top:1043.60px;color:#0a716a;-webkit-text-stroke:0.4px #14a79c;">Sort</span>
<span class="t" style="left:325.94px;top:1043.60px;color:#0a716a;-webkit-text-stroke:0.4px #14a79c;">Kill</span>
<span class="t" style="left:452.66px;top:1043.60px;color:#0a716a;-webkit-text-stroke:0.4px #14a79c;">Quit</span>
<span class="t" style="left:579.38px;top:1043.60px;color:#0a716a;-webkit-text-stroke:0.4px #14a79c;">Save</span>
<span class="t" style="left:636.98px;top:1043.60px;color:#0a716a;-webkit-text-stroke:0.4px #14a79c;">Config</span>
<svg style="position:absolute;left:0;top:0" width="2048" height="300">
<polygon points="732.6,143.7 810.9,145.4 810.9,172.7 732.3,171.9" fill="rgba(126,15,32,0.92)"/>
<polygon points="734.9,232.9 807,235.2 807,263.9 791.1,263.9 783.3,262.2 734.9,260.2" fill="rgba(126,15,32,0.92)"/>
<polygon points="1684.0,142.4 1712.9,144.6 1753.3,148.2 1753.3,176.2 1725.9,176.2 1684.0,171.0" fill="rgba(126,15,32,0.92)"/>
<polygon points="1669.7,237.4 1692.1,235.7 1760.4,235.7 1760.4,263.9 1702.5,263.9 1669.7,265.4" fill="rgba(126,15,32,0.92)"/>
</svg>
<span class="t" style="left:740.66px;top:151.85px;color:#d9627a;-webkit-text-stroke:0.3px #7e0f20;">350</span>
<span class="t" style="left:786.74px;top:151.85px;color:#d9627a;-webkit-text-stroke:0.3px #7e0f20;">W</span>
<span class="t" style="left:1685.30px;top:151.85px;color:#d9627a;-webkit-text-stroke:0.3px #7e0f20;">350</span>
<span class="t" style="left:1731.38px;top:151.85px;color:#d9627a;-webkit-text-stroke:0.3px #7e0f20;">W</span>
<span class="t" style="left:740.66px;top:238.85px;color:#d9627a;-webkit-text-stroke:0.3px #7e0f20;">350</span>
<span class="t" style="left:786.74px;top:238.85px;color:#d9627a;-webkit-text-stroke:0.3px #7e0f20;">W</span>
<span class="t" style="left:1685.30px;top:238.85px;color:#d9627a;-webkit-text-stroke:0.3px #7e0f20;">350</span>
<span class="t" style="left:1731.38px;top:238.85px;color:#d9627a;-webkit-text-stroke:0.3px #7e0f20;">W</span>
</div>
<div style="position:absolute;left:0.00px;top:773.00px;width:1.20px;height:9.00px;background:#bdbdbd;"></div>
<div style="position:absolute;left:0.00px;top:957.00px;width:1.20px;height:8.00px;background:#bdbdbd;"></div>
<div style="position:absolute;left:0.00px;top:994.00px;width:1.20px;height:10.00px;background:#bdbdbd;"></div>
<div style="position:absolute;left:0.00px;top:1126.00px;width:2042.00px;height:2.00px;background:#393939;"></div>
<div style="position:absolute;left:109.40px;top:1128.00px;width:1.60px;height:24.00px;background:#3a3a3a;"></div>
<div style="position:absolute;left:301.00px;top:1128.00px;width:1.60px;height:24.00px;background:#3a3a3a;"></div>
<div style="position:absolute;left:1726.20px;top:1128.00px;width:1.60px;height:24.00px;background:#3a3a3a;"></div>
<div style="position:absolute;left:1981.40px;top:1128.00px;width:1.60px;height:24.00px;background:#3a3a3a;"></div>
<div style="position:absolute;left:2020.60px;top:1128.00px;width:1.60px;height:24.00px;background:#3a3a3a;"></div>
<div style="position:absolute;left:2022.50px;top:1128.00px;width:19.00px;height:24.00px;background:#323232;"></div>
<div class="s" style="left:-4px;top:1136px;font-size:16.4px;line-height:20px;color:#ececec;-webkit-text-stroke:0.42px #ececec;">Node</div>
<div class="s" style="left:123px;top:1136px;font-size:16.4px;line-height:20px;color:#ececec;-webkit-text-stroke:0.42px #ececec;">User name</div>
<div class="s" style="left:315px;top:1136px;font-size:16.4px;line-height:20px;color:#ececec;-webkit-text-stroke:0.42px #ececec;">Description</div>
<div class="s" style="left:1740px;top:1136px;font-size:16.4px;line-height:20px;color:#ececec;-webkit-text-stroke:0.42px #ececec;">Status</div>
<div style="position:absolute;left:788.70px;top:1075.00px;width:62.00px;height:6.50px;background:#555;border-top:1px solid #8a8a8a;border-left:1px solid #777;border-right:1px solid #777;box-sizing:border-box;"></div>
<svg style="position:absolute;left:812px;top:1077px" width="14" height="5" viewBox="0 0 14 5"><path d="M1 0 H13 L7 5Z" fill="#1c1c1c"/></svg>
<svg style="position:absolute;left:2019px;top:134px" width="13" height="9" viewBox="0 0 13 9"><path d="M6.5 0.5 L12.5 8.5 H0.5Z" fill="#8c8c8c"/></svg>
<svg style="position:absolute;left:2019px;top:1050px" width="13" height="9" viewBox="0 0 13 9"><path d="M6.5 8.5 L12.5 0.5 H0.5Z" fill="#8c8c8c"/></svg>
</div></body></html>
